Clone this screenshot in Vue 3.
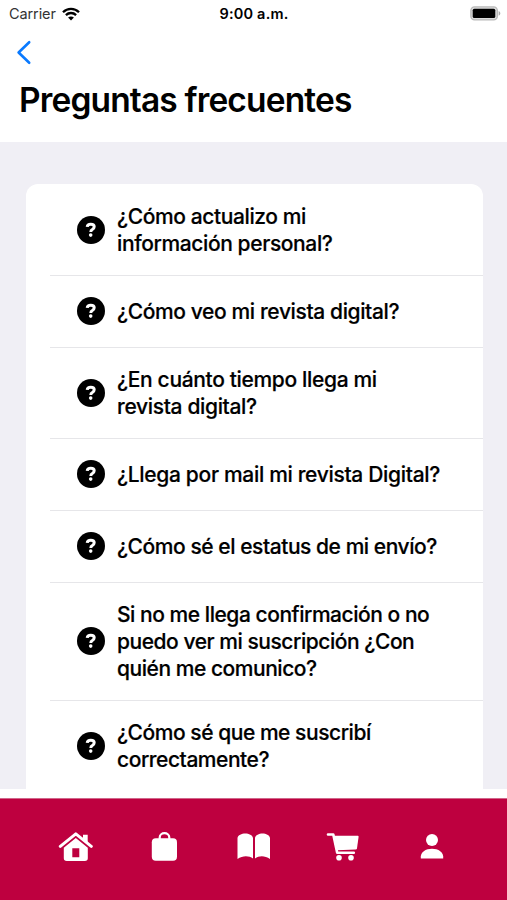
<template>
  <div class="screen">
    <div class="status-bar">
      <div class="carrier">
        <span>Carrier</span>
        <svg class="wifi" viewBox="0 0 18 14">
          <path d="M1 5.200C5.500.7 12.500.7 17 5.200M3.900 8.100c2.900-2.800 7.300-2.800 10.200 0" fill="none" stroke="#000" stroke-width="2.300" />
          <path d="M9 13.400l-2.900-2.800c1.700-1.500 4.100-1.500 5.800 0z" />
        </svg>
      </div>
      <span class="time">9:00 a.m.</span>
      <svg class="battery" viewBox="0 0 31 15">
        <rect x=".9" y=".9" width="26.400" height="13" rx="3.600" fill="#ddd" stroke="#b9b9b9" stroke-width="1.400" />
        <rect x="2.700" y="2.700" width="22.600" height="9.400" rx="1.600" />
        <path d="M28.600 5v4.800c2.300-.9 2.300-3.900 0-4.800z" fill="#aaa" />
      </svg>
    </div>

    <header class="header">
      <button class="back" aria-label="Atrás">
        <svg viewBox="0 0 16 26">
          <path d="M13.200 3.200L2.600 13.500l10.600 10.300" fill="none" stroke="#0a7aff" stroke-width="2.600" stroke-linecap="round" stroke-linejoin="round" />
        </svg>
      </button>
      <h1>Preguntas frecuentes</h1>
    </header>

    <main class="content">
      <ul class="card">
        <li v-for="(question, index) in questions" :key="index" class="row">
          <svg class="icon" viewBox="0 0 28 28">
            <circle cx="14" cy="14" r="14" />
            <path d="M10.200 10.900c.2-1.900 1.600-2.700 3.600-2.700 2.200 0 3.400 1 3.400 2.600 0 1.300-.7 2-1.900 2.700-1.100.6-1.500 1-1.500 2.400" fill="none" stroke="#fff" stroke-width="3" />
            <circle cx="13.700" cy="19.100" r="1.800" fill="#fff" />
          </svg>
          <p :style="{ letterSpacing: question.tracking + 'px' }">
            <span v-for="line in question.lines" :key="line">{{ line }}</span>
          </p>
        </li>
      </ul>
    </main>

    <nav class="tab-bar">
      <button aria-label="Inicio">
        <svg viewBox="0 0 36 32">
          <g transform="translate(.8 .8)">
            <path d="M2.500 15.500L18 3l15.500 12.500" fill="none" stroke="#fff" stroke-width="3" stroke-linecap="round" stroke-linejoin="round" />
            <path d="M25.200 4h4.700v7.800l-4.700-3.600z" fill="#fff" />
            <path d="M18 7.200L30 17v10.500q0 2.700-3 2.700H9q-3 0-3-2.700V17zM14.500 17.500v9h7v-9z" fill="#fff" fill-rule="evenodd" />
          </g>
        </svg>
      </button>
      <button aria-label="Tienda">
        <svg viewBox="0 0 36 32">
          <rect x="5.800" y="8.200" width="25.200" height="22.600" rx="4" fill="#fff" />
          <path d="M13.700 9.500V7.400c0-5.600 9.600-5.600 9.600 0v2.100" fill="none" stroke="#fff" stroke-width="2.200" />
        </svg>
      </button>
      <button aria-label="Revistas">
        <svg viewBox="0 0 36 32">
          <path d="M1.500 8C2.500 2 16 2 17 8v20.500c-4-3.200-10.500-3.200-15.500.5zM19 8c1-6 14-6 15 0v21c-5-3.700-11-3.700-15-.5z" fill="#fff" />
        </svg>
      </button>
      <button aria-label="Carrito">
        <svg viewBox="0 0 36 32">
          <path d="M3 4.500h5.300l3.900 18.200h16.600" fill="none" stroke="#fff" stroke-width="2.600" stroke-linecap="round" stroke-linejoin="round" />
          <path d="M8.500 5.800h24.300q.9 0 .8 1L32 18.200q-.2 1.300-1.300 1.400L12 20.200z" fill="#fff" />
          <circle cx="14" cy="27.800" r="2.800" fill="#fff" />
          <circle cx="26" cy="27.800" r="2.800" fill="#fff" />
        </svg>
      </button>
      <button aria-label="Perfil">
        <svg viewBox="0 0 36 32">
          <circle cx="18" cy="10" r="6" fill="#fff" />
          <path d="M6.800 28.400c-1.800-13 24.200-13 22.400 0z" fill="#fff" />
        </svg>
      </button>
    </nav>
  </div>
</template>

<script setup>
// Cada pregunta se guarda separada por líneas, con su espaciado entre letras
const questions = [
  { lines: ['¿Cómo actualizo mi', 'información personal?'], tracking: -0.39 },
  { lines: ['¿Cómo veo mi revista digital?'], tracking: -0.38 },
  { lines: ['¿En cuánto tiempo llega mi', 'revista digital?'], tracking: -0.34 },
  { lines: ['¿Llega por mail mi revista Digital?'], tracking: -0.32 },
  { lines: ['¿Cómo sé el estatus de mi envío?'], tracking: -0.45 },
  { lines: ['Si no me llega confirmación o no', 'puedo ver mi suscripción ¿Con', 'quién me comunico?'], tracking: -0.46 },
  { lines: ['¿Cómo sé que me suscribí', 'correctamente?'], tracking: -0.46 },
];
</script>

<style>
body {
  margin: 0;
}
</style>

<style scoped>
.screen {
  display: flex;
  flex-direction: column;
  width: 507px;
  height: 900px;
  overflow: hidden;
  background: #fff;
  color: #000;
  font-family: Inter, sans-serif;
}

.status-bar {
  display: grid;
  grid-template-columns: 1fr auto 1fr;
  align-items: center;
  height: 27px;
  padding: 0 6px 0 9px;
  box-sizing: border-box;
  font-size: 14.5px;
}

.carrier {
  display: flex;
  align-items: center;
  gap: 6px;
  color: #333;
  letter-spacing: -0.1px;
}

.wifi {
  width: 18px;
  height: 14px;
}

.time {
  margin-right: 2px;
  font-weight: 600;
  letter-spacing: 0.2px;
}

.battery {
  width: 31px;
  height: 15px;
  justify-self: end;
}

.header {
  height: 115px;
}

button {
  padding: 0;
  border: 0;
  background: none;
}

.back {
  display: block;
  margin: 12px 0 0 16px;
}

.back svg {
  display: block;
  width: 16px;
  height: 26px;
}

h1 {
  margin: 14px 0 0 19px;
  font-size: 33.5px;
  line-height: 42px;
  font-weight: 600;
  letter-spacing: -0.85px;
  white-space: nowrap;
}

.content {
  height: 647px;
  padding: 42px 24px 0 26px;
  box-sizing: border-box;
  overflow: hidden;
  background: #f0eff5;
}

.card {
  margin: 0;
  padding: 0.5px 0 0;
  list-style: none;
  background: #fff;
  border-radius: 12px 12px 0 0;
}

.row {
  display: flex;
  align-items: center;
  gap: 12.5px;
  min-height: 72px;
  margin-left: 24px;
  padding: 18px 0 18px 26.5px;
  box-sizing: border-box;
  border-bottom: 1px solid #e6e6e9;
}

.icon {
  flex: none;
  width: 28px;
  height: 28px;
}

p {
  margin: 0;
  font-size: 21px;
  line-height: 27px;
  font-weight: 500;
  -webkit-text-stroke: 0.2px #000;
}

p span {
  display: block;
  white-space: nowrap;
}

.tab-bar {
  display: flex;
  justify-content: space-between;
  height: 102px;
  margin-top: 9px;
  padding: 31px 57px 0;
  box-sizing: border-box;
  border-top: 1px solid #d0668a;
  background: #be003f;
}

.tab-bar svg {
  display: block;
  width: 36px;
  height: 32px;
}

.tab-bar button {
  height: 32px;
}
</style>
